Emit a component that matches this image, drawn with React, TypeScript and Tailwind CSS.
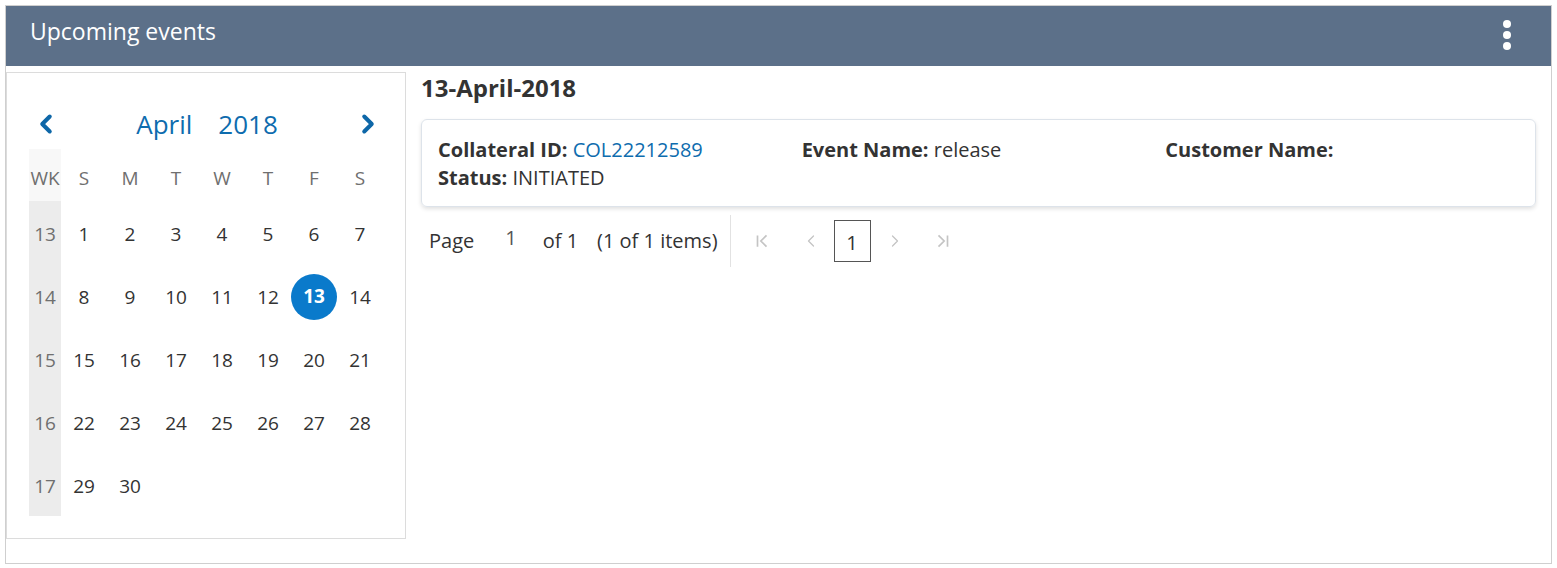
import { ChevronLeft, ChevronRight } from "lucide-react";

const FONT = { fontFamily: '"Open Sans", "Noto Sans", sans-serif' };

const weeks: { wk: number; days: (number | null)[] }[] = [
  { wk: 13, days: [1, 2, 3, 4, 5, 6, 7] },
  { wk: 14, days: [8, 9, 10, 11, 12, 13, 14] },
  { wk: 15, days: [15, 16, 17, 18, 19, 20, 21] },
  { wk: 16, days: [22, 23, 24, 25, 26, 27, 28] },
  { wk: 17, days: [29, 30, null, null, null, null, null] },
];

function Calendar() {
  return (
    <div className="flex h-[467px] w-[400px] shrink-0 flex-col border border-[#dcdcdc] pl-[22px] pt-[34px]">
      <div className="flex h-[34px] w-[354px] items-center justify-between pl-[2px]">
        <button className="text-[#0e67a8]">
          <ChevronLeft size={30} strokeWidth={3.2} />
        </button>
        <div className="flex gap-[26px] text-[26px] text-[#0e6cae]">
          <span>April</span>
          <span>2018</span>
        </div>
        <button className="text-[#0e67a8]">
          <ChevronRight size={30} strokeWidth={3.2} />
        </button>
      </div>
      <table className="mt-[8px] w-[354px] table-fixed border-collapse text-[19px]">
        <thead>
          <tr className="h-[52px] text-[#6f6f6f]">
            <th className="w-[32px] bg-[#f8f8f8] p-0 pt-[7px] text-center font-normal">WK</th>
            {["S", "M", "T", "W", "T", "F", "S"].map((d, i) => (
              <th key={i} className="w-[46px] p-0 pt-[7px] text-center font-normal">
                {d}
              </th>
            ))}
          </tr>
        </thead>
        <tbody>
          {weeks.map((w) => (
            <tr key={w.wk} className="h-[63px]">
              <td className="bg-[#ececec] p-0 pt-[4px] text-center text-[#6f6f6f]">{w.wk}</td>
              {w.days.map((d, i) => (
                <td key={i} className="p-0 pt-[4px] text-center text-[#333]">
                  {d === 13 ? (
                    <span className="mx-auto -mt-[2px] flex h-[46px] w-[46px] items-center justify-center rounded-full bg-[#0a7acb] font-bold text-white">
                      13
                    </span>
                  ) : (
                    d
                  )}
                </td>
              ))}
            </tr>
          ))}
        </tbody>
      </table>
    </div>
  );
}

function Field({ label, value, link }: { label: string; value?: string; link?: boolean }) {
  return (
    <div>
      <span className="font-bold text-[#333]">{label}</span>
      {value && (
        <span className={link ? " text-[#0e6cae]" : " text-[#333]"}> {value}</span>
      )}
    </div>
  );
}

function LastIcon() {
  return (
    <svg width="18" height="18" viewBox="0 0 16 16" fill="none" stroke="currentColor" strokeWidth="1.5">
      <path d="M4 3l5 5-5 5M12 3v10" />
    </svg>
  );
}

function FirstIcon() {
  return (
    <svg width="18" height="18" viewBox="0 0 16 16" fill="none" stroke="currentColor" strokeWidth="1.5">
      <path d="M12 3L7 8l5 5M4 3v10" />
    </svg>
  );
}

export default function App() {
  return (
    <div className="bg-white p-[5px]" style={FONT}>
      <div className="flex h-[559px] flex-col border border-[#cfcfcf]">
        <div className="flex h-[60px] items-center justify-between bg-[#5c7089] pl-[24px] pr-[40px]">
          <h1 className="pb-[9px] text-[23px] text-white">Upcoming events</h1>
          <div className="flex flex-col gap-[3px] pb-[2px]">
            <span className="h-[8px] w-[8px] rounded-full bg-white" />
            <span className="h-[8px] w-[8px] rounded-full bg-white" />
            <span className="h-[8px] w-[8px] rounded-full bg-white" />
          </div>
        </div>
        <div className="flex gap-[15px] pt-[6px]">
          <Calendar />
          <div className="flex flex-1 flex-col pr-[15px]">
            <h2 className="h-[34px] text-[24px] font-bold leading-[32px] text-[#333]">
              13-April-2018
            </h2>
            <div className="mt-[13px] rounded-[6px] border border-[#dde3ea] pl-[16px] pr-[6px] pt-[16px] pb-[14px] text-[20px] leading-[28px] shadow-[0_2px_4px_rgba(0,0,0,0.12)]">
              <div className="grid grid-cols-3">
                <Field label="Collateral ID:" value="COL22212589" link />
                <Field label="Event Name:" value="release" />
                <Field label="Customer Name:" />
                <Field label="Status:" value="INITIATED" />
              </div>
            </div>
            <div className="mt-[8px] flex h-[52px] items-center text-[20px] text-[#333]">
              <div className="flex items-center pl-[8px] pr-[12px]">
                <span>Page</span>
                <span className="ml-[31px] -translate-y-[3px] text-[#555]">1</span>
                <span className="ml-[26px]">of 1</span>
                <span className="ml-[19px]">(1 of 1 items)</span>
              </div>
              <div className="h-[52px] w-px bg-[#e2e2e2]" />
              <div className="flex items-center text-[#c4c4c4]">
                <span className="ml-[22px]"><FirstIcon /></span>
                <span className="ml-[30px]"><ChevronLeft size={20} strokeWidth={1.5} /></span>
                <span className="ml-[13px] flex h-[42px] w-[37px] items-center justify-center border border-[#555] pt-[4px] text-[#333]">
                  1
                </span>
                <span className="ml-[14px]"><ChevronRight size={20} strokeWidth={1.5} /></span>
                <span className="ml-[29px]"><LastIcon /></span>
              </div>
            </div>
          </div>
        </div>
      </div>
    </div>
  );
}
